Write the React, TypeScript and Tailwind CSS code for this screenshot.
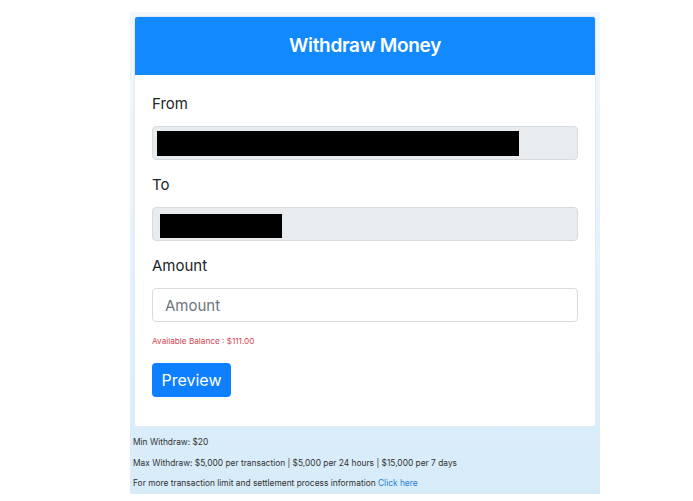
export default function App() {
  return (
    <div
      className="h-[501px] w-[693px] bg-white"
      style={{ fontFamily: "Inter, 'Noto Sans', sans-serif" }}
    >
      <div className="ml-[130px] h-[12px]" />
      <div className="ml-[130px] flex w-[470px] flex-col bg-gradient-to-b from-[#f2f7fc] to-[#d7ebf9]">
        <div className="m-1 flex shrink-0 flex-col overflow-hidden rounded-[3px] border border-[#e2eaf4] bg-white">
          <div className="flex h-[58px] shrink-0 items-center justify-center bg-[#1289ff]">
            <h1 className="text-[19px] font-semibold tracking-[-0.3px] text-white">Withdraw Money</h1>
          </div>

          <div className="flex flex-col px-[17px] pb-[29px] pt-[17px]">
            <label className="text-[15px] leading-6 text-[#212529]">From</label>
            <div className="mt-[10px] flex h-[34px] items-start rounded-[4px] border border-[#d6dbe0] bg-[#e9ecef] pl-[4px] pt-[4px]">
              <div className="h-[25px] w-[362px] bg-black" />
            </div>

            <label className="mt-[13px] text-[15px] leading-6 text-[#212529]">To</label>
            <div className="mt-[10px] flex h-[34px] items-start rounded-[4px] border border-[#d6dbe0] bg-[#e9ecef] pl-[7px] pt-[6px]">
              <div className="h-[24px] w-[122px] bg-black" />
            </div>

            <label className="mt-[13px] text-[15px] leading-6 text-[#212529]">Amount</label>
            <input
              type="text"
              placeholder="Amount"
              className="mt-[10px] h-[34px] rounded-[4px] border border-[#d6dbe0] bg-white px-3 text-[15px] text-[#212529] outline-none placeholder:text-[#6c757d]"
            />

            <p className="mt-[13px] text-[8.2px] leading-3 text-[#cf4450]">Available Balance : $111.00</p>

            <div className="mt-4">
              <button
                type="button"
                className="h-[34px] w-[79px] rounded-[4px] bg-[#0d7fff] text-[16px] text-white"
              >
                Preview
              </button>
            </div>
          </div>
        </div>

        <div className="mt-[1px] flex flex-col pl-[3px] text-[8.4px] leading-[20.5px] text-[#333]">
          <p>Min Withdraw: $20</p>
          <p>Max Withdraw: $5,000 per transaction | $5,000 per 24 hours | $15,000 per 7 days</p>
          <p>
            For more transaction limit and settlement process information{" "}
            <a className="text-[#1e7fd6]">Click here</a>
          </p>
        </div>
      </div>
    </div>
  );
}
